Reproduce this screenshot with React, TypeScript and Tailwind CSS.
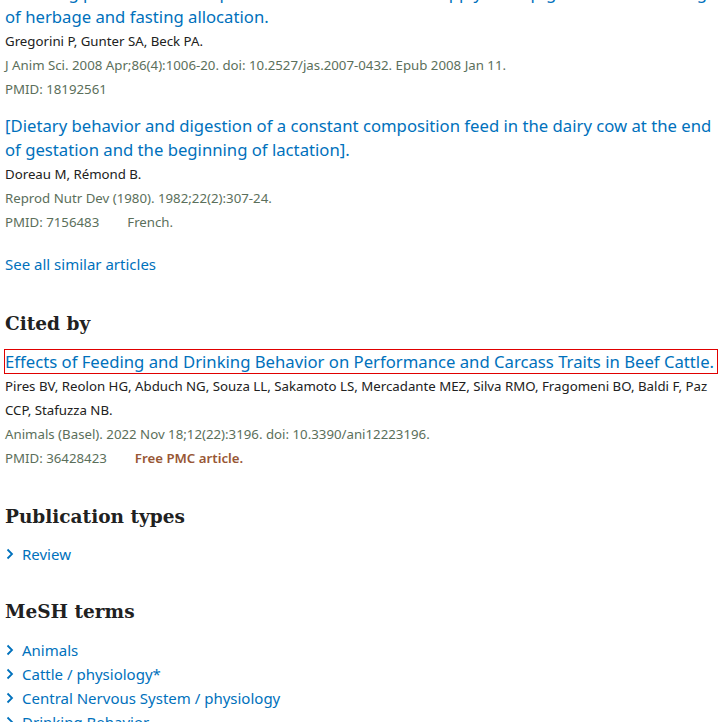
import React from 'react';

const sans = "font-['Noto_Sans','Open_Sans',sans-serif]";
const serif = "font-['DejaVu_Serif','Liberation_Serif',serif]";

const similar = [
  {
    title: 'Matching plant and animal processes to alter nutrient supply in strip-grazed cattle: timing of herbage and fasting allocation.',
    authors: 'Gregorini P, Gunter SA, Beck PA.',
    journal: 'J Anim Sci. 2008 Apr;86(4):1006-20. doi: 10.2527/jas.2007-0432. Epub 2008 Jan 11.',
    pmid: '18192561',
    note: '',
  },
  {
    title: '[Dietary behavior and digestion of a constant composition feed in the dairy cow at the end of gestation and the beginning of lactation].',
    authors: 'Doreau M, Rémond B.',
    journal: 'Reprod Nutr Dev (1980). 1982;22(2):307-24.',
    pmid: '7156483',
    note: 'French.',
  },
];

const mesh = ['Animals', 'Cattle / physiology*', 'Central Nervous System / physiology', 'Drinking Behavior'];

// chevron drawn by hand, lucide's one is too slim here
const Term = ({ label }: { label: string }) => (
  <div className="flex items-center h-6 text-[15px] text-[#0071bc]">
    <svg width="17" height="12" viewBox="0 0 17 12" className="shrink-0">
      <polyline points="2.5,1.5 7,6 2.5,10.5" fill="none" stroke="currentColor" strokeWidth="1.8" />
    </svg>
    <span>{label}</span>
  </div>
);

export default function App() {
  return (
    <div className={`bg-white w-[722px] h-[722px] overflow-hidden ${sans}`}>
      <div className="pl-[5px] w-[722px] -mt-[19px]">
        {similar.map((a, i) => (
          <div key={i} className={i > 0 ? 'mt-[13px]' : ''}>
            <div className="text-[16.7px] leading-6 text-[#0071bc]">{a.title}</div>
            <div className="text-[13.25px] leading-6 text-[#212121]">{a.authors}</div>
            <div className="text-[13.25px] leading-6 text-[#5b6f5b]">{a.journal}</div>
            <div className="flex text-[13.25px] leading-6 text-[#5b6f5b]">
              <span>PMID: {a.pmid}</span>
              {a.note && <span className="ml-7">{a.note}</span>}
            </div>
          </div>
        ))}

        <div className="mt-[18px] text-[15px] leading-6 text-[#0071bc]">See all similar articles</div>

        <h2 className={`mt-[33px] h-[30px] leading-[30px] text-[18.5px] font-bold text-[#212121] ${serif}`}>Cited by</h2>

        <div className="mt-[10px] -ml-px w-[714px] border border-[#e00000] h-[25px] leading-[23px] text-[16.7px] text-[#0071bc] whitespace-nowrap">
          Effects of Feeding and Drinking Behavior on Performance and Carcass Traits in Beef Cattle.
        </div>
        <div className="w-[713px] text-[13.25px] leading-6 text-[#212121]">
          Pires BV, Reolon HG, Abduch NG, Souza LL, Sakamoto LS, Mercadante MEZ, Silva RMO, Fragomeni BO, Baldi F, Paz CCP, Stafuzza NB.
        </div>
        <div className="text-[13.25px] leading-6 text-[#5b6f5b]">
          Animals (Basel). 2022 Nov 18;12(22):3196. doi: 10.3390/ani12223196.
        </div>
        <div className="flex text-[13.25px] leading-6">
          <span className="text-[#5b6f5b]">PMID: 36428423</span>
          <span className="ml-7 font-semibold text-[#985735]">Free PMC article.</span>
        </div>

        <h2 className={`mt-[32px] h-[30px] leading-[30px] text-[18.5px] font-bold text-[#212121] ${serif}`}>Publication types</h2>
        <div className="mt-[10px]">
          <Term label="Review" />
        </div>

        <h2 className={`mt-[31px] h-[30px] leading-[30px] text-[18.5px] font-bold text-[#212121] ${serif}`}>MeSH terms</h2>
        <div className="mt-[11px]">
          {mesh.map((m) => (
            <Term key={m} label={m} />
          ))}
        </div>
      </div>
    </div>
  );
}
